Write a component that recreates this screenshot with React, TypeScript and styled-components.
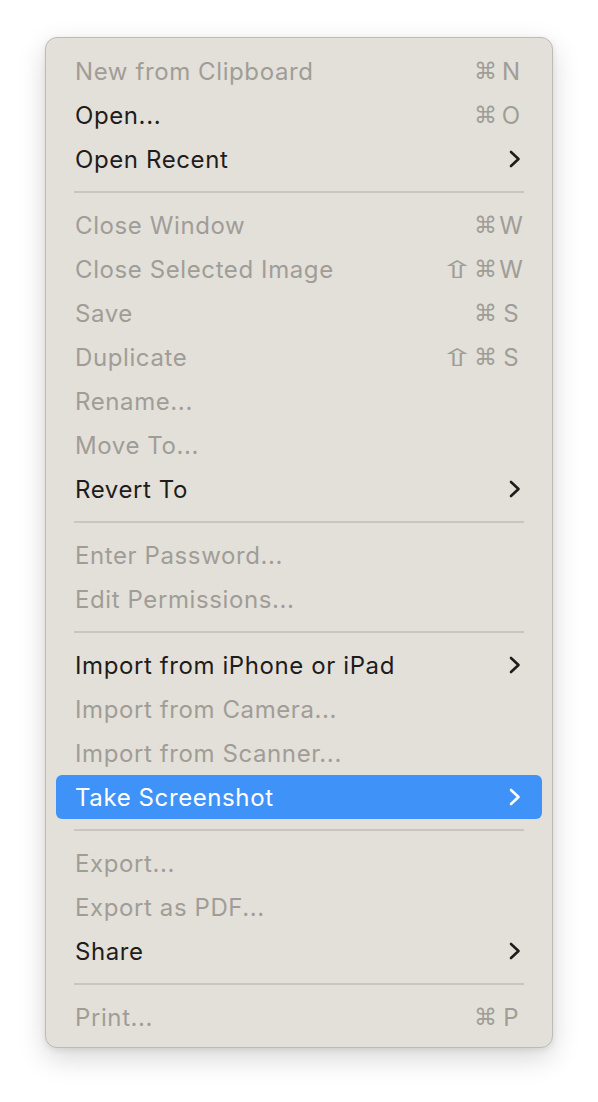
import React from "react";
import styled, { createGlobalStyle } from "styled-components";

type Item = {
  label: string;
  enabled?: boolean;
  shortcut?: string;
  submenu?: boolean;
  active?: boolean;
};

const groups: Item[][] = [
  [
    { label: "New from Clipboard", shortcut: "⌘N" },
    { label: "Open...", enabled: true, shortcut: "⌘O" },
    { label: "Open Recent", enabled: true, submenu: true },
  ],
  [
    { label: "Close Window", shortcut: "⌘W" },
    { label: "Close Selected Image", shortcut: "⇧⌘W" },
    { label: "Save", shortcut: "⌘S" },
    { label: "Duplicate", shortcut: "⇧⌘S" },
    { label: "Rename..." },
    { label: "Move To..." },
    { label: "Revert To", enabled: true, submenu: true },
  ],
  [{ label: "Enter Password..." }, { label: "Edit Permissions..." }],
  [
    { label: "Import from iPhone or iPad", enabled: true, submenu: true },
    { label: "Import from Camera..." },
    { label: "Import from Scanner..." },
    { label: "Take Screenshot", enabled: true, submenu: true, active: true },
  ],
  [
    { label: "Export..." },
    { label: "Export as PDF..." },
    { label: "Share", enabled: true, submenu: true },
  ],
  [{ label: "Print...", shortcut: "⌘P" }],
];

const GlobalStyle = createGlobalStyle`
  body {
    margin: 0;
    background: #ffffff;
    font-family: "Inter", "Noto Sans", "DejaVu Sans", sans-serif;
  }
`;

const Page = styled.div`
  width: 598px;
  height: 1102px;
  padding: 37px 0 0 45px;
  box-sizing: border-box;
`;

const Menu = styled.div`
  width: 508px;
  box-sizing: border-box;
  padding: 11px 10px 8px;
  background: #e3e0da;
  border: 1px solid #bebbb6;
  border-radius: 12px;
  box-shadow: 0 10px 28px rgba(0, 0, 0, 0.16), 0 2px 6px rgba(0, 0, 0, 0.08);
`;

const Row = styled.div<{ $enabled: boolean; $active: boolean }>`
  height: 44px;
  display: flex;
  align-items: center;
  padding: 0 18px 0 19px;
  border-radius: 6px;
  font-size: 24px;
  letter-spacing: 0.6px;
  color: ${(p) => (p.$active ? "#ffffff" : p.$enabled ? "#1e1d1c" : "#a09d97")};
  background: ${(p) => (p.$active ? "#3f93f8" : "transparent")};
`;

const Label = styled.span`
  flex: 1;
  white-space: nowrap;
`;

const Shortcut = styled.span`
  display: flex;
  align-items: center;
  gap: 6px;
  color: #a09d97;
  letter-spacing: 0;
`;

const Glyph = styled.span<{ $wide?: boolean }>`
  display: inline-block;
  font-family: "DejaVu Sans", sans-serif;
  font-size: ${(p) => (p.$wide ? "25px" : "23px")};
  width: 21px;
  text-align: center;
  transform: ${(p) => (p.$wide ? "scale(1.7, 0.95)" : "none")};
`;

const Key = styled.span`
  width: 26px;
  margin-left: -3px;
  text-align: center;
`;

const Separator = styled.div`
  height: 2px;
  margin: 10px 18px;
  background: #c9c6c0;
`;

const Chevron: React.FC<{ color: string }> = ({ color }) => (
  <svg width="12" height="18" viewBox="0 0 12 18" style={{ marginRight: 3 }}>
    <path
      d="M2 2 L9.5 9 L2 16"
      fill="none"
      stroke={color}
      strokeWidth="2.6"
      strokeLinecap="round"
      strokeLinejoin="round"
    />
  </svg>
);

const renderShortcut = (s: string) => {
  const chars = Array.from(s);
  const key = chars[chars.length - 1];
  const mods = chars.slice(0, -1);
  return (
    <Shortcut>
      {mods.map((m, i) => (
        <Glyph key={i} $wide={m === "⇧"}>
          {m}
        </Glyph>
      ))}
      <Key>{key}</Key>
    </Shortcut>
  );
};

const App: React.FC = () => {
  return (
    <Page>
      <GlobalStyle />
      <Menu>
        {groups.map((group, gi) => (
          <React.Fragment key={gi}>
            {gi > 0 && <Separator />}
            {group.map((item) => (
              <Row
                key={item.label}
                $enabled={!!item.enabled}
                $active={!!item.active}
              >
                <Label>{item.label}</Label>
                {item.shortcut && renderShortcut(item.shortcut)}
                {item.submenu && (
                  <Chevron color={item.active ? "#ffffff" : "#1e1d1c"} />
                )}
              </Row>
            ))}
          </React.Fragment>
        ))}
      </Menu>
    </Page>
  );
};

export default App;
